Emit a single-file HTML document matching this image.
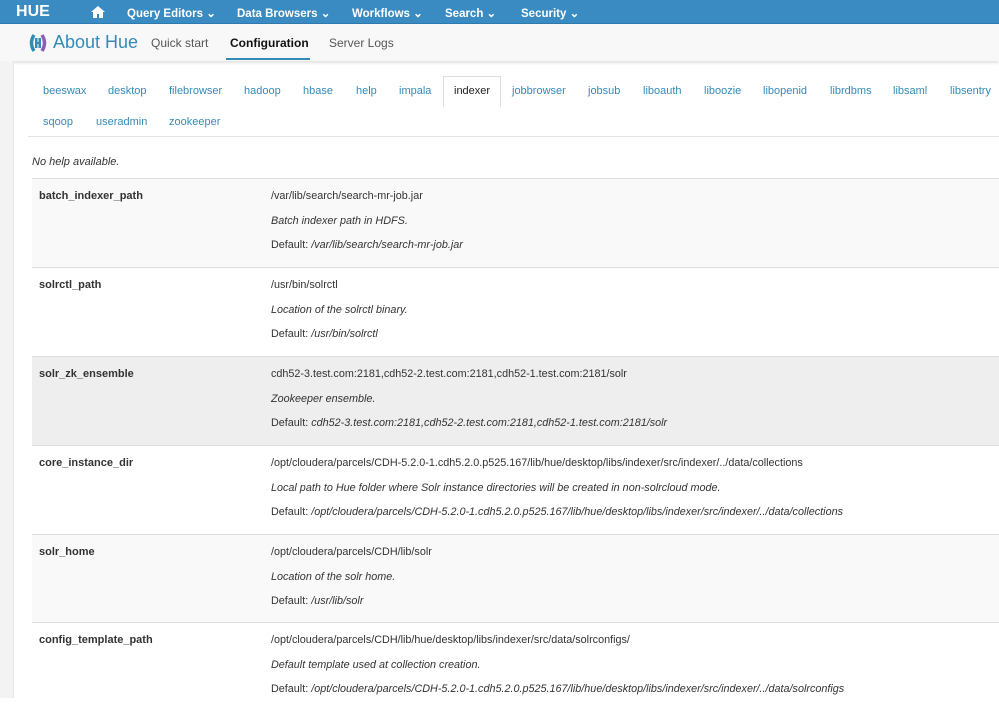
<!DOCTYPE html>
<html><head><style>
*{box-sizing:border-box;margin:0;padding:0}
body{width:999px;height:698px;overflow:hidden;font-family:"Liberation Sans",Arial,sans-serif;font-size:11px;color:#333;background:#fff;position:relative}
.top{position:absolute;left:0;top:0;width:999px;height:24px;background:#3a8bc1;border-bottom:1px solid #2f7bb0;color:#fff;font-weight:bold;font-size:11.5px}
.top span{position:absolute;top:6px}
.sub{position:absolute;left:0;top:24px;width:999px;height:37px;background:#f8f8f8;box-shadow:0 2px 3px rgba(0,0,0,.12)}
.sub span{position:absolute;top:12px;font-size:12px;color:#555}
.strip{position:absolute;left:0;top:61px;width:14px;height:637px;background:#f3f3f3;border-right:1px solid #e6e6e6}
.tabs a{position:absolute;color:#338bb8;text-decoration:none;font-size:11px}
.act{position:absolute;left:443px;top:76px;width:58px;height:31px;border:1px solid #ddd;border-bottom:none;background:#fff}
.line{position:absolute;left:28px;top:136px;width:971px;height:1px;background:#e4e4e4}
.row{position:absolute;left:32px;width:967px;height:89px;border-top:1px solid #ddd}
.row b{position:absolute;left:7px;top:11px;font-size:11px;color:#333}
.row .v{position:absolute;left:239px;top:5px;line-height:24.5px;font-size:10.8px;color:#333;white-space:nowrap}
i{font-style:italic}
</style></head><body>
<div class="top">
<span style="left:16px;top:3px;font-size:16px;letter-spacing:0px">H<span style="position:static">UE</span></span>
<svg style="position:absolute;left:91px;top:6px" width="14" height="12" viewBox="0 0 14 12"><path d="M7 0L0 6h2v6h4V8h2v4h4V6h2z" fill="#fff"/></svg>
<span style="left:127px">Query Editors ⌄</span>
<span style="left:237px">Data Browsers ⌄</span>
<span style="left:352px">Workflows ⌄</span>
<span style="left:445px">Search ⌄</span>
<span style="left:521px">Security ⌄</span>
</div>
<div class="sub">
<svg style="position:absolute;left:29px;top:10px" width="18" height="18" viewBox="0 0 18 18"><path d="M5 1Q0 9 5 17" stroke="#338bb8" stroke-width="3.5" fill="none"/><path d="M13 1Q18 9 13 17" stroke="#8b5fb5" stroke-width="3.5" fill="none"/><rect x="6" y="4" width="2.5" height="10" fill="#338bb8"/><rect x="9.5" y="4" width="2.5" height="10" fill="#338bb8"/><rect x="6" y="8" width="6" height="2" fill="#338bb8"/></svg>
<span style="left:53px;top:8px;font-size:18px;color:#338bb8">About Hue</span>
<span style="left:151px">Quick start</span>
<span style="left:230px;color:#111;font-weight:bold">Configuration</span>
<div style="position:absolute;left:226px;top:34px;width:84px;height:2px;background:#338bb8"></div>
<span style="left:329px">Server Logs</span>
</div>
<div class="strip"></div>
<div class="act"></div>
<div class="tabs">
<a style="left:43px;top:85px">beeswax</a><a style="left:108px;top:85px">desktop</a><a style="left:169px;top:85px">filebrowser</a><a style="left:244px;top:85px">hadoop</a><a style="left:303px;top:85px">hbase</a><a style="left:356px;top:85px">help</a><a style="left:399px;top:85px">impala</a><a style="left:454px;top:85px;color:#222">indexer</a><a style="left:512px;top:85px">jobbrowser</a><a style="left:588px;top:85px">jobsub</a><a style="left:643px;top:85px">liboauth</a><a style="left:704px;top:85px">liboozie</a><a style="left:763px;top:85px">libopenid</a><a style="left:830px;top:85px">librdbms</a><a style="left:893px;top:85px">libsaml</a><a style="left:950px;top:85px">libsentry</a>
<a style="left:43px;top:116px">sqoop</a><a style="left:96px;top:116px">useradmin</a><a style="left:169px;top:116px">zookeeper</a>
</div>
<div class="line"></div>
<div style="position:absolute;left:32px;top:156px;font-style:italic">No help available.</div>
<div class="row" style="top:178px;background:#f9f9f9"><b>batch_indexer_path</b><div class="v">/var/lib/search/search-mr-job.jar<br><i>Batch indexer path in HDFS.</i><br>Default: <i>/var/lib/search/search-mr-job.jar</i></div></div>
<div class="row" style="top:267px"><b>solrctl_path</b><div class="v">/usr/bin/solrctl<br><i>Location of the solrctl binary.</i><br>Default: <i>/usr/bin/solrctl</i></div></div>
<div class="row" style="top:356px;background:#eeeeee"><b>solr_zk_ensemble</b><div class="v">cdh52-3.test.com:2181,cdh52-2.test.com:2181,cdh52-1.test.com:2181/solr<br><i>Zookeeper ensemble.</i><br>Default: <i>cdh52-3.test.com:2181,cdh52-2.test.com:2181,cdh52-1.test.com:2181/solr</i></div></div>
<div class="row" style="top:445px"><b>core_instance_dir</b><div class="v">/opt/cloudera/parcels/CDH-5.2.0-1.cdh5.2.0.p525.167/lib/hue/desktop/libs/indexer/src/indexer/../data/collections<br><i>Local path to Hue folder where Solr instance directories will be created in non-solrcloud mode.</i><br>Default: <i>/opt/cloudera/parcels/CDH-5.2.0-1.cdh5.2.0.p525.167/lib/hue/desktop/libs/indexer/src/indexer/../data/collections</i></div></div>
<div class="row" style="top:534px;background:#f9f9f9"><b>solr_home</b><div class="v">/opt/cloudera/parcels/CDH/lib/solr<br><i>Location of the solr home.</i><br>Default: <i>/usr/lib/solr</i></div></div>
<div class="row" style="top:622px"><b>config_template_path</b><div class="v">/opt/cloudera/parcels/CDH/lib/hue/desktop/libs/indexer/src/data/solrconfigs/<br><i>Default template used at collection creation.</i><br>Default: <i>/opt/cloudera/parcels/CDH-5.2.0-1.cdh5.2.0.p525.167/lib/hue/desktop/libs/indexer/src/indexer/../data/solrconfigs</i></div></div>
</body></html>
